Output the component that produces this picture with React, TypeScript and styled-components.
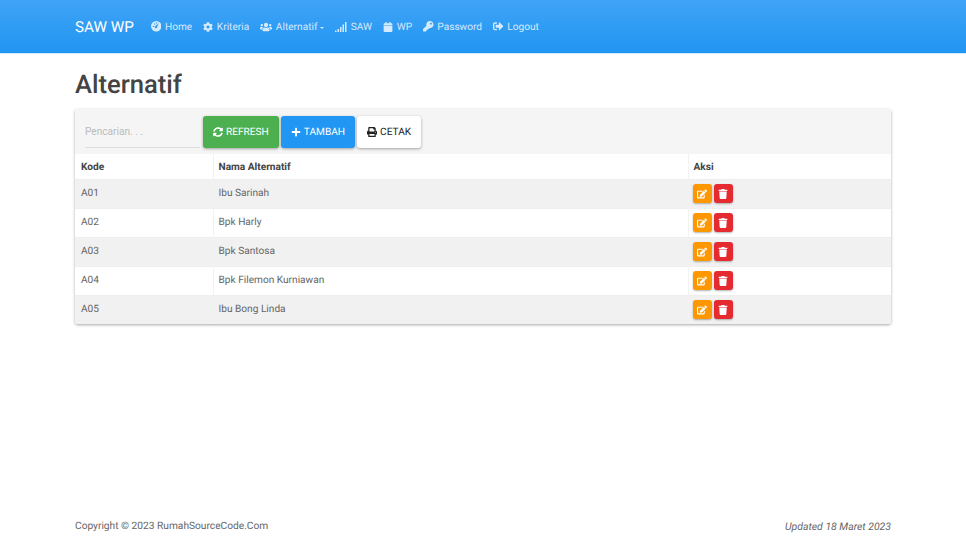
import React from 'react'
import styled, { createGlobalStyle } from 'styled-components'
import { FaCalendar, FaCog, FaEdit, FaKey, FaPlus, FaPrint, FaSignOutAlt, FaSyncAlt, FaTrash, FaUsers } from 'react-icons/fa'

// Types
type Alternatif = { kode: string; nama: string }
type Tone = 'green' | 'blue' | 'white'

const alternatif: Alternatif[] = [
  { kode: 'A01', nama: 'Ibu Sarinah' },
  { kode: 'A02', nama: 'Bpk Harly' },
  { kode: 'A03', nama: 'Bpk Santosa' },
  { kode: 'A04', nama: 'Bpk Filemon Kurniawan' },
  { kode: 'A05', nama: 'Ibu Bong Linda' },
]

// Icons
function DashboardIcon(): React.JSX.Element {
  return (
    <svg viewBox='0 0 20 20' width='10.5' height='10.5'>
      <path
        fill='currentColor'
        fillRule='evenodd'
        d='M10 0a10 10 0 1 1 0 20a10 10 0 0 1 0-20zM14.6 4.2L9 9a2.4 2.4 0 1 0 2.8 2.2zM4.6 9a1.3 1.3 0 1 0 0 2.6a1.3 1.3 0 0 0 0-2.6zM6.8 4.4a1.3 1.3 0 1 0 0 2.6a1.3 1.3 0 0 0 0-2.6zM11 2.6a1.3 1.3 0 1 0 0 2.6a1.3 1.3 0 0 0 0-2.6z'
      />
    </svg>
  )
}

function SignalIcon(): React.JSX.Element {
  return (
    <svg viewBox='0 0 24 20' width='12' height='10'>
      <path fill='currentColor' d='M0 17h3v3H0zM5 14h3v6H5zM10 10h3v10h-3zM15 5h3v15h-3zM20 0h3v20h-3z' />
    </svg>
  )
}

const menu = [
  { label: 'Home', icon: <DashboardIcon /> },
  { label: 'Kriteria', icon: <FaCog size={10} /> },
  { label: 'Alternatif', icon: <FaUsers size={12} />, caret: true },
  { label: 'SAW', icon: <SignalIcon /> },
  { label: 'WP', icon: <FaCalendar size={10} /> },
  { label: 'Password', icon: <FaKey size={10.5} /> },
  { label: 'Logout', icon: <FaSignOutAlt size={10.5} /> },
]

export default function App(): React.JSX.Element {
  return (
    <Page>
      <GlobalStyle />
      <Navbar>
        <Container>
          <NavInner>
            <Brand>SAW WP</Brand>
            <Menu>
              {menu.map((item) => (
                <MenuItem key={item.label}>
                  {item.icon}
                  {item.label}
                  {item.caret && <Caret />}
                </MenuItem>
              ))}
            </Menu>
          </NavInner>
        </Container>
      </Navbar>

      <Main>
        <Container>
          <Title>Alternatif</Title>
          <Card>
            <Toolbar>
              <SearchInput placeholder='Pencarian. . .' />
              <ToolButton $tone='green'>
                <FaSyncAlt />
                REFRESH
              </ToolButton>
              <ToolButton $tone='blue'>
                <FaPlus />
                TAMBAH
              </ToolButton>
              <ToolButton $tone='white'>
                <FaPrint />
                CETAK
              </ToolButton>
            </Toolbar>
            <Table>
              <thead>
                <tr>
                  <KodeHead>Kode</KodeHead>
                  <NamaHead>Nama Alternatif</NamaHead>
                  <HeadCell>Aksi</HeadCell>
                </tr>
              </thead>
              <tbody>
                {alternatif.map((row) => (
                  <Row key={row.kode}>
                    <Cell>{row.kode}</Cell>
                    <Cell>{row.nama}</Cell>
                    <ActionCell>
                      <Actions>
                        <IconButton $color='#ff9800'>
                          <FaEdit />
                        </IconButton>
                        <IconButton $color='#e52a30'>
                          <FaTrash />
                        </IconButton>
                      </Actions>
                    </ActionCell>
                  </Row>
                ))}
              </tbody>
            </Table>
          </Card>
        </Container>
      </Main>

      <Footer>
        <Container>
          <FooterInner>
            <span>Copyright © 2023 RumahSourceCode.Com</span>
            <Updated>Updated 18 Maret 2023</Updated>
          </FooterInner>
        </Container>
      </Footer>
    </Page>
  )
}

const GlobalStyle = createGlobalStyle`
  html, body {
    margin: 0;
    padding: 0;
    background: #ffffff;
  }

  body {
    font-family: Roboto, "Liberation Sans", sans-serif;
    font-size: 10.15px;
    color: #666666;
    text-rendering: geometricPrecision;
  }

  * {
    box-sizing: border-box;
  }
`

const Page = styled.div`
  height: 543px;
  display: flex;
  flex-direction: column;
  overflow: hidden;
`

const Container = styled.div`
  width: 816px;
  margin: 0 auto;
`

const Navbar = styled.nav`
  height: 54px;
  flex: none;
  background: linear-gradient(#40a4f6, #2095f2);
  border-bottom: 1px solid #d3e8f8;
`

const NavInner = styled.div`
  height: 53px;
  padding-top: 2px;
  display: flex;
  align-items: center;
`

const Brand = styled.div`
  font-size: 15.2px;
  line-height: 51px;
  color: #ffffff;
  margin-right: 17px;
`

const Menu = styled.div`
  display: flex;
  align-items: center;
  gap: 11px;
`

const MenuItem = styled.div`
  display: flex;
  align-items: center;
  gap: 3.7px;
  font-size: 10.15px;
  color: rgba(255, 255, 255, 0.8);

  svg {
    margin-top: -2px;
  }
`

const Caret = styled.span`
  width: 0;
  height: 0;
  margin-left: -1px;
  border-top: 2.5px solid rgba(255, 255, 255, 0.8);
  border-left: 2.5px solid transparent;
  border-right: 2.5px solid transparent;
`

const Main = styled.main`
  flex: 1;
`

const Title = styled.h1`
  margin: 0;
  padding-top: 17px;
  height: 55px;
  font-size: 25.6px;
  line-height: 28px;
  font-weight: 500;
  color: #444444;
`

const Card = styled.section`
  height: 215px;
  background: #ffffff;
  border-radius: 3px;
  box-shadow: 0 1px 3px rgba(0, 0, 0, 0.35);
  overflow: hidden;
`

const Toolbar = styled.div`
  height: 45px;
  display: flex;
  align-items: center;
  gap: 2px;
  padding-left: 10px;
  background: #f5f5f5;
`

const SearchInput = styled.input`
  width: 115px;
  height: 33px;
  margin-right: 1px;
  padding: 1px 0 0;
  border: 0;
  border-bottom: 1px solid #dddddd;
  outline: none;
  background: transparent;
  font-family: inherit;
  font-size: 10.15px;
  color: #666666;

  &::placeholder {
    color: #bbbbbb;
    opacity: 1;
  }
`

const toneStyles: Record<Tone, string> = {
  green: 'background: #4caf50; color: #ffffff;',
  blue: 'background: #2196f3; color: #ffffff;',
  white: 'background: #ffffff; color: #222222;',
}

const ToolButton = styled.button<{ $tone: Tone }>`
  ${(p) => toneStyles[p.$tone]}
  height: 32px;
  display: flex;
  align-items: center;
  gap: 3px;
  padding: 1px 10px 0;
  border: 0;
  border-radius: 3px;
  box-shadow: 0 1px 3px rgba(0, 0, 0, 0.35);
  font-family: inherit;
  font-size: 10.15px;
  text-rendering: geometricPrecision;

  svg {
    margin-top: -1px;
    font-size: 10px;
  }
`

const Table = styled.table`
  width: 100%;
  border-collapse: collapse;
  table-layout: fixed;
`

const HeadCell = styled.th`
  height: 25px;
  padding: 2px 5px 0;
  text-align: left;
  font-size: 10.15px;
  font-weight: 700;
  color: #444444;
`

const KodeHead = styled(HeadCell)`
  width: 138px;
  padding-left: 6px;
  border-right: 1px solid #f2f2f2;
`

const NamaHead = styled(HeadCell)`
  width: 475px;
  border-right: 1px solid #f2f2f2;
`

const Row = styled.tr`
  height: 29px;
  border-top: 1px solid #eeeeee;

  &:nth-child(odd) {
    background: #f1f1f1;
  }
`

const Cell = styled.td`
  padding: 0 5px;
  font-size: 10.15px;
  color: #666666;
  border-right: 1px solid #f2f2f2;

  &:first-child {
    padding-left: 6px;
  }
`

const ActionCell = styled.td`
  padding: 0 4px;
`

const Actions = styled.div`
  display: flex;
  gap: 2px;
`

const IconButton = styled.button<{ $color: string }>`
  width: 19px;
  height: 19px;
  display: flex;
  align-items: center;
  justify-content: center;
  padding: 0;
  border: 0;
  border-radius: 3px;
  background: ${(p) => p.$color};
  color: #ffffff;
  box-shadow: 0 1px 2px rgba(0, 0, 0, 0.3);

  svg {
    font-size: 10px;
  }
`

const Footer = styled.footer`
  height: 25px;
  padding-top: 1px;
  flex: none;
  font-size: 10.2px;
  color: #666666;
`

const FooterInner = styled.div`
  display: flex;
  justify-content: space-between;
  line-height: 16px;
`

const Updated = styled.em`
  font-size: 10.45px;
  font-style: italic;
`
